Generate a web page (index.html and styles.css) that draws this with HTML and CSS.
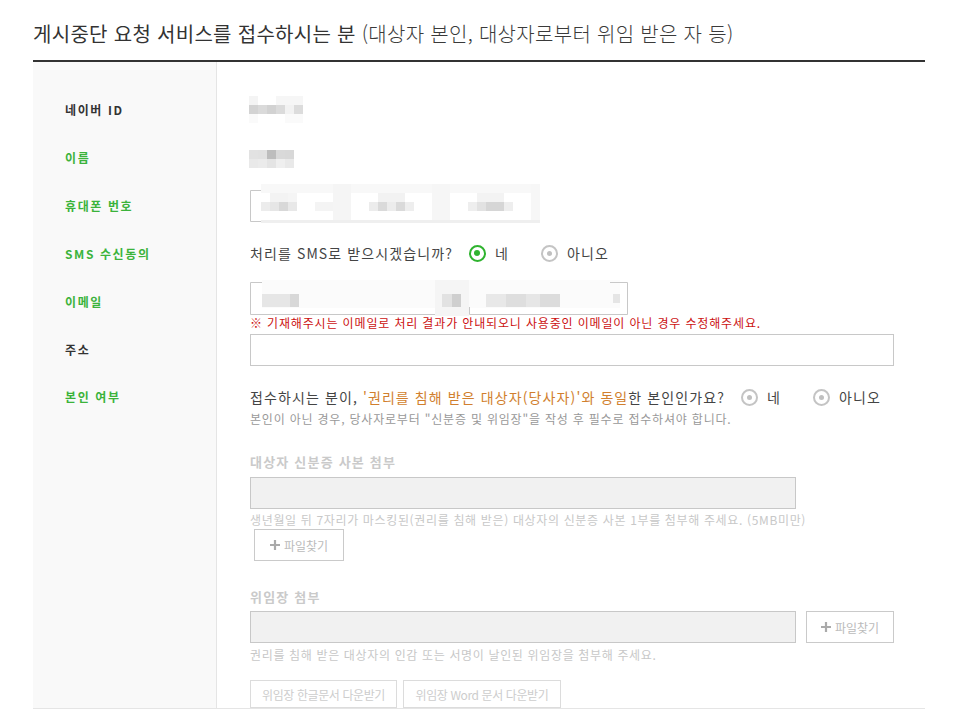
FILE: index.html
```html
<!DOCTYPE html>
<html lang="ko">
<head>
<meta charset="utf-8">
<title>게시중단 요청 서비스</title>
<link rel="stylesheet" href="styles.css">
</head>
<body>
<div class="page">
  <h2 class="title"><span class="main">게시중단 요청 서비스를 접수하시는 분</span> <span class="sub">(대상자 본인, 대상자로부터 위임 받은 자 등)</span></h2>
  <div class="form">
    <div class="row r1">
      <div class="label dark">네이버 ID</div>
      <div class="cell">
        <svg class="blur" width="54" height="27" viewBox="0 0 54 27">
          <rect x="0" y="0" width="9" height="9" fill="#f4f4f4"/>
          <rect x="27" y="0" width="27" height="9" fill="#f6f6f6"/>
          <rect x="0" y="9" width="9" height="9" fill="#d3d3d3"/>
          <rect x="9" y="9" width="9" height="9" fill="#dadada"/>
          <rect x="18" y="9" width="9" height="9" fill="#d2d2d2"/>
          <rect x="27" y="9" width="9" height="9" fill="#dbdbdb"/>
          <rect x="36" y="9" width="9" height="9" fill="#f2f2f2"/>
          <rect x="45" y="9" width="9" height="9" fill="#dcdcdc"/>
          <rect x="0" y="18" width="9" height="9" fill="#fafafa"/>
          <rect x="36" y="18" width="18" height="9" fill="#fafafa"/>
        </svg>
      </div>
    </div>
    <div class="row r2">
      <div class="label green">이름</div>
      <div class="cell">
        <svg class="blur" width="45" height="18" viewBox="0 0 45 18">
          <rect x="0" y="0" width="9" height="9" fill="#e2e2e2"/>
          <rect x="9" y="0" width="9" height="9" fill="#e1e1e1"/>
          <rect x="18" y="0" width="9" height="9" fill="#bdbdbd"/>
          <rect x="27" y="0" width="9" height="9" fill="#d9d9d9"/>
          <rect x="36" y="0" width="9" height="9" fill="#d8d8d8"/>
          <rect x="0" y="9" width="9" height="9" fill="#e9e9e9"/>
          <rect x="9" y="9" width="9" height="9" fill="#ebebeb"/>
          <rect x="18" y="9" width="9" height="9" fill="#e4e4e4"/>
          <rect x="27" y="9" width="9" height="9" fill="#efefef"/>
          <rect x="36" y="9" width="9" height="9" fill="#e9e9e9"/>
        </svg>
      </div>
    </div>
    <div class="row r3">
      <div class="label green">휴대폰 번호</div>
      <div class="cell">
        <svg class="blur" width="292" height="40" viewBox="0 0 292 40">
          <path d="M11 6.5H0.5V37.5H11" fill="none" stroke="#c8c8c8"/>
          <rect x="11" y="0" width="279" height="9" fill="#f8f8f8"/>
          <rect x="83" y="0" width="18" height="39" fill="#f5f5f5"/>
          <rect x="182" y="0" width="18" height="39" fill="#f6f6f6"/>
          <rect x="281" y="0" width="9" height="39" fill="#f7f7f7"/>
          <rect x="11" y="36" width="279" height="3" fill="#efefef"/>
          <rect x="20" y="9" width="18" height="9" fill="#f3f3f3"/>
          <rect x="38" y="9" width="9" height="9" fill="#f5f5f5"/>
          <rect x="11" y="18" width="9" height="9" fill="#ececec"/>
          <rect x="20" y="18" width="9" height="9" fill="#e6e6e6"/>
          <rect x="29" y="18" width="9" height="9" fill="#d8d8d8"/>
          <rect x="38" y="18" width="9" height="9" fill="#e8e8e8"/>
          <rect x="65" y="18" width="18" height="9" fill="#f4f4f4"/>
          <rect x="128" y="9" width="27" height="9" fill="#f2f2f2"/>
          <rect x="119" y="18" width="9" height="9" fill="#ececec"/>
          <rect x="128" y="18" width="9" height="9" fill="#dadada"/>
          <rect x="137" y="18" width="9" height="9" fill="#ececec"/>
          <rect x="146" y="18" width="9" height="9" fill="#dadada"/>
          <rect x="155" y="18" width="9" height="9" fill="#eeeeee"/>
          <rect x="227" y="9" width="27" height="9" fill="#f3f3f3"/>
          <rect x="218" y="18" width="9" height="9" fill="#eeeeee"/>
          <rect x="227" y="18" width="9" height="9" fill="#e2e2e2"/>
          <rect x="236" y="18" width="18" height="9" fill="#d6d6d6"/>
          <rect x="254" y="18" width="9" height="9" fill="#eeeeee"/>
        </svg>
      </div>
    </div>
    <div class="row r4">
      <div class="label green">SMS 수신동의</div>
      <div class="cell">
        <div class="q">
          <span>처리를 SMS로 받으시겠습니까?</span>
          <label class="opt first"><span class="radio on"></span>네</label>
          <label class="opt"><span class="radio"></span>아니오</label>
        </div>
      </div>
    </div>
    <div class="row r5">
      <div class="label green">이메일</div>
      <div class="cell">
        <svg class="blur" width="380" height="36" viewBox="0 0 380 36">
          <rect x="12" y="0" width="358" height="28" fill="#fbfbfb"/>
          <path d="M12 2.5H0.5V34.5H188.5V27" fill="none" stroke="#c8c8c8"/>
          <path d="M219.5 27V34.5H377.5V2.5H360" fill="none" stroke="#c8c8c8"/>
          <rect x="185" y="0" width="34" height="36" fill="#f5f5f5"/>
          <rect x="12" y="14" width="28" height="13" fill="#e6e6e6"/>
          <rect x="40" y="14" width="9" height="13" fill="#d8d8d8"/>
          <rect x="192" y="14" width="10" height="13" fill="#e2e2e2"/>
          <rect x="202" y="14" width="9" height="13" fill="#cfcfcf"/>
          <rect x="236" y="14" width="20" height="13" fill="#e8e8e8"/>
          <rect x="256" y="14" width="20" height="13" fill="#dedede"/>
          <rect x="276" y="14" width="14" height="13" fill="#e6e6e6"/>
          <rect x="290" y="14" width="20" height="13" fill="#dcdcdc"/>
          <rect x="363" y="14" width="7" height="9" fill="#e5e5e5"/>
        </svg>
        <div class="warn">※ 기재해주시는 이메일로 처리 결과가 안내되오니 사용중인 이메일이 아닌 경우 수정해주세요.</div>
      </div>
    </div>
    <div class="row r6">
      <div class="label dark">주소</div>
      <div class="cell">
        <div class="input addr"></div>
      </div>
    </div>
    <div class="row r7">
      <div class="label green">본인 여부</div>
      <div class="cell">
        <div class="q">
          <span>접수하시는 분이, <em class="hl">'권리를 침해 받은 대상자(당사자)'와 동일</em>한 본인인가요?</span>
          <label class="opt first"><span class="radio"></span>네</label>
          <label class="opt"><span class="radio"></span>아니오</label>
        </div>
        <div class="q-note">본인이 아닌 경우, 당사자로부터 "신분증 및 위임장"을 작성 후 필수로 접수하셔야 합니다.</div>

        <div class="sec-title">대상자 신분증 사본 첨부</div>
        <div class="input file"></div>
        <div class="f-note">생년월일 뒤 7자리가 마스킹된(권리를 침해 받은) 대상자의 신분증 사본 1부를 첨부해 주세요. (5MB미만)</div>
        <button class="btn-file indent" type="button"><svg width="10" height="10" viewBox="0 0 10 10"><path d="M5 0V10M0 5H10" stroke="#aaa" stroke-width="2.2"/></svg>파일찾기</button>

        <div class="sec-title">위임장 첨부</div>
        <div class="file-row">
          <div class="input file"></div>
          <button class="btn-file" type="button"><svg width="10" height="10" viewBox="0 0 10 10"><path d="M5 0V10M0 5H10" stroke="#aaa" stroke-width="2.2"/></svg>파일찾기</button>
        </div>
        <div class="f-note">권리를 침해 받은 대상자의 인감 또는 서명이 날인된 위임장을 첨부해 주세요.</div>
        <div class="dl-row">
          <button class="btn-dl w1" type="button">위임장 한글문서 다운받기</button>
          <button class="btn-dl w2" type="button">위임장 Word 문서 다운받기</button>
        </div>
      </div>
    </div>
  </div>
</div>
</body>
</html>
```

FILE: styles.css
```css
* { box-sizing: border-box; }

body {
  margin: 0;
  background: #fff;
  font-family: "Noto Sans CJK KR", "Noto Sans", sans-serif;
  color: #333;
}

.page {
  width: 892px;
  margin-left: 33px;
}

.title {
  margin: 0;
  padding-top: 20px;
  height: 62px;
  line-height: 28px;
  font-size: 20px;
  font-weight: 400;
  letter-spacing: 0.3px;
  color: #333;
  border-bottom: 2px solid #333;
  white-space: nowrap;
}

.title .sub {
  font-weight: 300;
  color: #3a3a3a;
}

.form {
  border-bottom: 1px solid #e5e5e5;
}

.row {
  display: flex;
}

.label {
  width: 184px;
  flex: none;
  background: #f9f9f9;
  border-right: 1px solid #e5e5e5;
  padding-left: 32px;
  font-size: 12px;
  font-weight: 700;
  line-height: 16px;
  letter-spacing: 1.6px;
}

.label.dark { color: #333; }
.label.green { color: #3bb33b; }

.cell {
  flex: 1;
  padding-left: 33px;
  min-width: 0;
}

.blur { display: block; }

.r1 { height: 72px; }
.r1 .label { padding-top: 40px; }
.r1 .cell { padding-top: 34px; padding-left: 32px; }

.r2 { height: 48px; }
.r2 .label { padding-top: 16px; }
.r2 .cell { padding-top: 16px; padding-left: 32px; }

.r3 { height: 48px; }
.r3 .label { padding-top: 16px; }
.r3 .cell { padding-top: 2px; }

.r4 { height: 48px; }
.r4 .label { padding-top: 16px; }
.r4 .cell { padding-top: 13px; }

.r5 { height: 54px; }
.r5 .label { padding-top: 16px; }
.r5 .cell { padding-top: 2px; }

.r6 { height: 42px; }
.r6 .label { padding-top: 10px; }
.r6 .cell { padding-top: 2px; }

.r7 .label { padding-top: 15px; }
.r7 .cell { padding-top: 13px; }

.q {
  display: flex;
  align-items: center;
  font-size: 14px;
  line-height: 20px;
  letter-spacing: 1.1px;
  color: #444;
  white-space: nowrap;
}

.hl {
  font-style: normal;
  color: #d17f2e;
}

.opt {
  display: flex;
  align-items: center;
  gap: 9px;
  margin-left: 32px;
}

.opt.first { margin-left: 16px; }

.radio {
  width: 17px;
  height: 17px;
  border-radius: 50%;
  border: 2px solid #c4c4c4;
  display: flex;
  align-items: center;
  justify-content: center;
}

.radio::after {
  content: "";
  width: 5px;
  height: 5px;
  border-radius: 50%;
  background: #c0c0c0;
}

.radio.on {
  border: 2.5px solid #2fb32f;
}

.radio.on::after {
  width: 6px;
  height: 6px;
  background: #2fb32f;
}

.warn {
  font-size: 12px;
  line-height: 14px;
  letter-spacing: 0.85px;
  color: #cc1111;
  white-space: nowrap;
}

.input {
  height: 32px;
  border: 1px solid #c8c8c8;
  background: #fff;
}

.input.addr { width: 644px; }

.input.file {
  width: 546px;
  background: #f1f1f1;
}

.q-note {
  margin-top: 5px;
  font-size: 12px;
  line-height: 14px;
  letter-spacing: 0.8px;
  color: #999;
  white-space: nowrap;
}

.sec-title {
  margin-top: 28px;
  font-size: 13px;
  font-weight: 700;
  line-height: 16px;
  letter-spacing: 1.2px;
  color: #cacaca;
}

.r7 .sec-title + .input { margin-top: 7px; }

.f-note {
  margin-top: 4px;
  font-size: 12px;
  line-height: 14px;
  letter-spacing: 0.65px;
  color: #c8c8c8;
  white-space: nowrap;
}

.file-row + .f-note { margin-top: 5px; }

.btn-file {
  display: flex;
  align-items: center;
  justify-content: center;
  gap: 4px;
  width: 90px;
  height: 32px;
  padding: 0;
  border: 1px solid #cacaca;
  background: #fff;
  font-family: inherit;
  font-size: 12px;
  color: #bbb;
}

.btn-file.indent {
  margin-top: 2px;
  margin-left: 4px;
}

.file-row {
  display: flex;
  gap: 10px;
  margin-top: 6px;
}

.file-row .btn-file { width: 88px; }

.dl-row {
  display: flex;
  gap: 6px;
  margin-top: 18px;
}

.btn-dl {
  height: 28px;
  padding: 0;
  border: 1px solid #dcdcdc;
  background: #fff;
  font-family: inherit;
  font-size: 12px;
  letter-spacing: -0.4px;
  color: #cdcdcd;
  white-space: nowrap;
}

.btn-dl.w1 { width: 147px; }
.btn-dl.w2 { width: 158px; }
```
